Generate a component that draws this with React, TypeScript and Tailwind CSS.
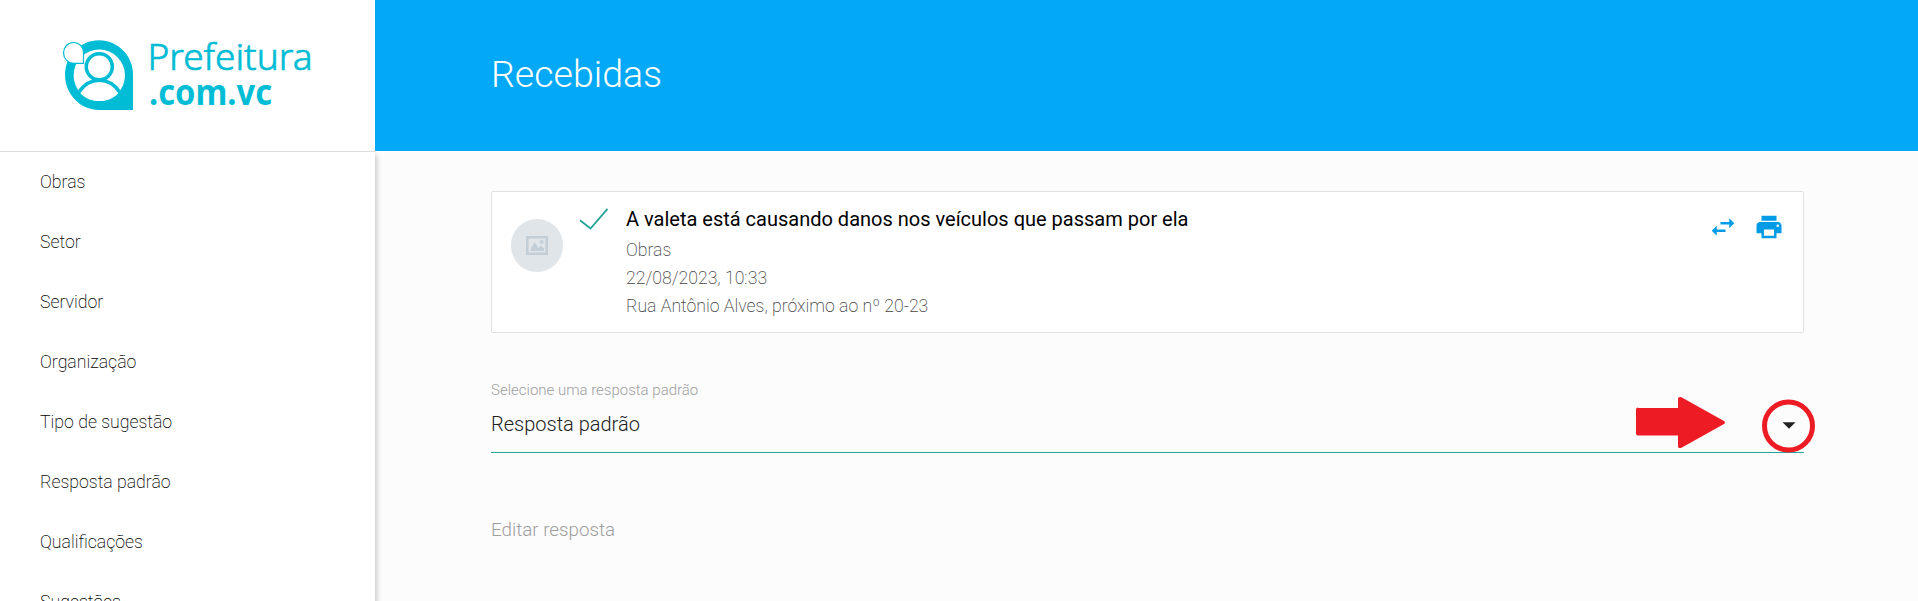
const menu = ["Obras", "Setor", "Servidor", "Organização", "Tipo de sugestão", "Resposta padrão", "Qualificações", "Sugestões"];

function Logo() {
  return (
    <svg width="375" height="151" viewBox="0 0 375 151" className="block shrink-0">
      <path d="M99 40.300c19 0 34 15.500 34 34.500V110H99c-19 0-34-16-34-35.200S80 40.300 99 40.300Z" fill="#00bcd4" />
      <circle cx="99.300" cy="75.300" r="25.700" fill="#fff" />
      <path d="M80.500 93.500c4.500-8 10.500-12.300 18.800-12.300s14.300 4.300 18.800 12.300c-5 5-11 7.500-18.800 7.500s-13.800-2.500-18.800-7.500Z" fill="#fff" />
      <path d="M79 92c5-7.500 12-11.800 20.300-11.800s15.300 4.300 20.300 11.800" fill="none" stroke="#00bcd4" strokeWidth="3.600" />
      <circle cx="99.300" cy="66.700" r="13" fill="#fff" stroke="#00bcd4" strokeWidth="3.500" />
      <path d="M73.500 42.500c5.600 0 10 4.500 10 10.100v10.700h-10c-5.600 0-10-5-10-10.600s4.400-10.200 10-10.200Z" fill="#fff" stroke="#00bcd4" strokeWidth="1.200" />
      <g fill="#00bcd4" fontFamily="'Noto Sans', sans-serif">
        <text x="147.500" y="70" fontSize="36" fontWeight="300" stroke="#00bcd4" strokeWidth="0.700" textLength="165" lengthAdjust="spacingAndGlyphs">Prefeitura</text>
        <text x="149" y="105" fontSize="36" fontWeight="700" textLength="123" lengthAdjust="spacingAndGlyphs">.com.vc</text>
      </g>
    </svg>
  );
}

export default function App() {
  return (
    <div className="flex h-[601px] w-[1918px] overflow-hidden bg-[#fcfcfc] font-['Roboto',sans-serif] font-light">
      <aside className="z-10 flex h-full w-[375px] shrink-0 flex-col bg-white">
        <Logo />
        <nav className="grow border-t border-[#dddddd] shadow-[2px_4px_5px_0_rgba(0,0,0,0.2)]">
          {menu.map((m) => (
            <a key={m} className="block h-[60px] pl-10 text-[17.700px] leading-[60px] font-extralight text-black">{m}</a>
          ))}
        </nav>
      </aside>
      <main className="flex min-w-0 grow flex-col">
        <header className="flex h-[151px] shrink-0 items-center bg-[#03a9f6] pl-[116px]">
          <h1 className="pb-[3px] text-[37.500px] leading-[44px] text-white">Recebidas</h1>
        </header>
        <div className="mt-10 ml-[116px] w-[1313px]">
          <section className="flex h-[142px] rounded-xs border border-[#e0e0e0] bg-white">
            <div className="mt-[27px] ml-[19px] flex h-[53px] w-[52px] shrink-0 items-center justify-center rounded-full bg-[#dfe5e9]">
              <svg width="22" height="19" viewBox="0 0 22 19">
                <path d="M0 0h22v19H0ZM2.500 2.500v14h17v-14Z" fill="#c3ced6" fillRule="evenodd" />
                <path d="M4 15l4.500-9 4 6 2.500-2.500 3 3V15Z" fill="#c3ced6" />
                <circle cx="15.700" cy="6" r="2" fill="#c3ced6" />
              </svg>
            </div>
            <svg width="28" height="22" viewBox="0 0 28 22" className="mt-4 ml-[17px]">
              <path d="M0 12.300 10.500 20.500 27.500 .800" fill="none" stroke="#26a69a" strokeWidth="1.900" />
            </svg>
            <div className="mt-[13px] ml-[18px] grow text-[17.650px] leading-7 font-extralight text-[#444444]">
              <h2 className="mb-[3px] text-[20px] font-normal text-black">A valeta está causando danos nos veículos que passam por ela</h2>
              <p>Obras</p>
              <p>22/08/2023, 10:33</p>
              <p>Rua Antônio Alves, próximo ao nº 20-23</p>
            </div>
            <div className="mt-[20px] mr-[19px] flex gap-4 text-[#039be5]">
              <svg width="30" height="30" viewBox="0 0 24 24" fill="currentColor"><path d="M6.990 11 3 15l3.990 4v-3H14v-2H6.990v-3zM21 9l-3.990-4v3H10v2h7.010v3L21 9z" /></svg>
              <svg width="30" height="30" viewBox="0 0 24 24" fill="currentColor"><path d="M19 8H5c-1.660 0-3 1.340-3 3v6h4v4h12v-4h4v-6c0-1.660-1.340-3-3-3zm-3 11H8v-5h8v5zm3-7c-.550 0-1-.450-1-1s.450-1 1-1 1 .450 1 1-.450 1-1 1zm-1-9H6v4h12V3z" /></svg>
            </div>
          </section>
          <label className="mt-[47px] block text-[15px] leading-5 text-[#9e9e9e]">Selecione uma resposta padrão</label>
          <div className="relative flex h-[53px] border-b border-[#26a69a] text-[20px] leading-[48px] text-[#212121]">
            <span>Resposta padrão</span>
            <svg width="184" height="60" viewBox="1636 394 184 60" className="absolute top-[-6px] left-[1145px]">
              <path d="M1638 408h40v-9.500q0-2 3-1.500l43 24q2 1.500 0 3l-43 24q-3 .500-3-1.500v-11h-40q-2 0-2-2v-24q0-2 2-2Z" fill="#ed1c24" />
              <circle cx="1788.500" cy="426" r="24" fill="none" stroke="#ed1c24" strokeWidth="5" />
              <path d="M1782.500 422.300h13l-6.500 6.500Z" fill="#212121" />
            </svg>
          </div>
          <p className="mt-[63px] text-[18.800px] leading-7 text-[#9e9e9e]">Editar resposta</p>
        </div>
      </main>
    </div>
  );
}
